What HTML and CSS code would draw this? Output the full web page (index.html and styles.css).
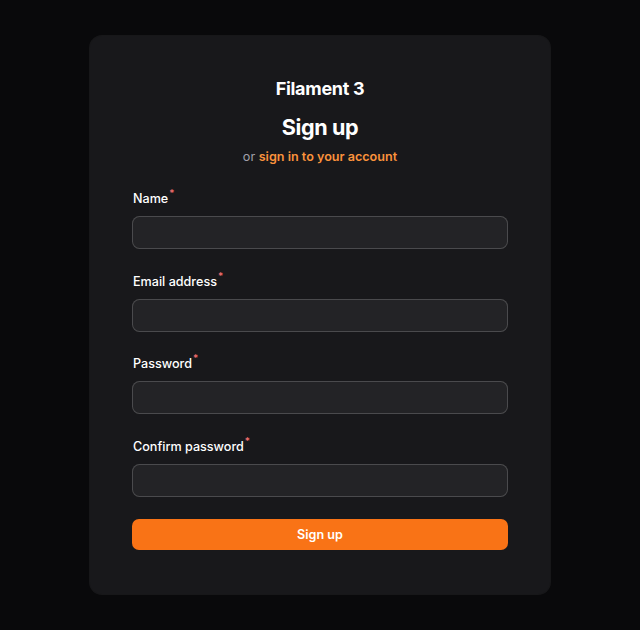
FILE: index.html
```html
<!DOCTYPE html>
<html lang="en">
<head>
<meta charset="utf-8">
<title>Sign up - Filament 3</title>
<link rel="stylesheet" href="styles.css">
</head>
<body>
<main class="card">
  <header class="head">
    <div class="brand">Filament 3</div>
    <h1 class="title">Sign up</h1>
    <p class="sub">or <a class="link" href="#">sign in to your account</a></p>
  </header>
  <form class="form">
    <div class="field">
      <label class="label">Name<sup class="req">*</sup></label>
      <input class="input" type="text">
    </div>
    <div class="field">
      <label class="label">Email address<sup class="req">*</sup></label>
      <input class="input" type="email">
    </div>
    <div class="field">
      <label class="label">Password<sup class="req">*</sup></label>
      <input class="input" type="password">
    </div>
    <div class="field">
      <label class="label">Confirm password<sup class="req">*</sup></label>
      <input class="input" type="password">
    </div>
    <button class="btn" type="button">Sign up</button>
  </form>
</main>
</body>
</html>
```
FILE: styles.css
```css
* { box-sizing: border-box; }
html, body { margin: 0; padding: 0; }
body {
  background: #09090b;
  font-family: Inter, "Noto Sans", sans-serif;
  color: #fff;
  min-height: 630px;
  padding-top: 36px;
}
.card {
  width: 460px;
  margin: 0 auto;
  background: #18181b;
  border-radius: 12px;
  box-shadow: 0 0 0 1px rgba(255,255,255,0.06);
  padding: 44px 42px 44px;
}
.head {
  display: flex;
  flex-direction: column;
  align-items: center;
}
.brand {
  font-size: 18px;
  font-weight: 700;
  line-height: 18px;
  letter-spacing: -0.3px;
}
.title {
  margin: 14.5px 0 0;
  font-size: 21.6px;
  line-height: 29px;
  font-weight: 700;
  letter-spacing: -0.4px;
}
.sub {
  margin: 6.5px 0 0;
  font-size: 12.6px;
  line-height: 18px;
  color: #a1a1aa;
}
.link {
  color: #fb923c;
  font-weight: 600;
  text-decoration: none;
}
.form {
  margin-top: 24px;
  display: flex;
  flex-direction: column;
  gap: 23.67px;
}
.field {
  display: flex;
  flex-direction: column;
  gap: 8px;
}
.label {
  padding-left: 1px;
  font-size: 12.6px;
  line-height: 18px;
  font-weight: 500;
  color: #fff;
}
.req {
  color: #f87171;
  font-weight: 500;
  font-size: 10px;
  line-height: 0;
  vertical-align: 6px;
  margin-left: 1px;
}
.input {
  height: 33px;
  width: 100%;
  background: rgba(255,255,255,0.05);
  border: 1px solid rgba(255,255,255,0.18);
  border-radius: 7.5px;
  outline: none;
}
.btn {
  margin-top: -1.67px;
  height: 31px;
  width: 100%;
  border: 0;
  border-radius: 7px;
  background: #f97316;
  color: #fff;
  font-family: inherit;
  font-size: 12.6px;
  font-weight: 600;
}
```
